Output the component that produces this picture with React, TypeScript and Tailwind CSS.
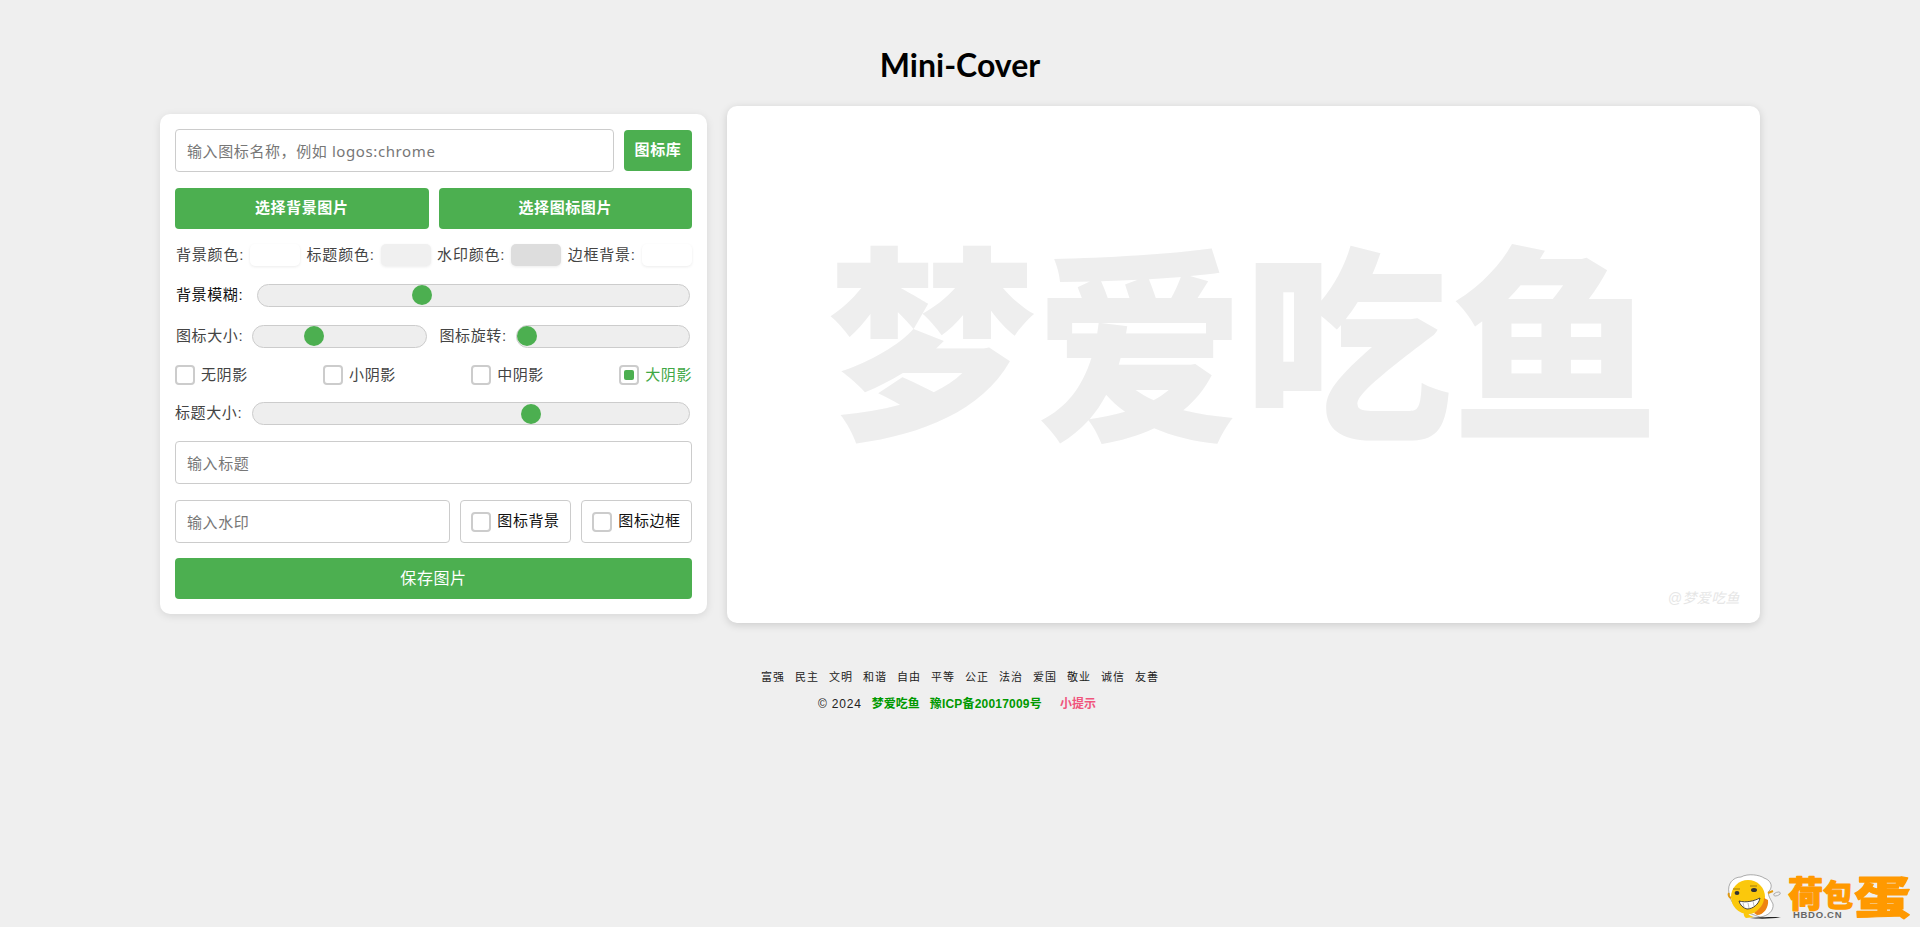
import { useState } from "react";

const cjk = "font-['Liberation_Sans','Noto_Sans_CJK_SC',sans-serif]";

const sliderCls =
  "h-[23px] min-w-0 flex-1 cursor-pointer appearance-none rounded-full border border-[#ccc] bg-[#eee] outline-none [&::-webkit-slider-thumb]:h-5 [&::-webkit-slider-thumb]:w-5 [&::-webkit-slider-thumb]:appearance-none [&::-webkit-slider-thumb]:rounded-full [&::-webkit-slider-thumb]:bg-[#4caf50]";

const inputCls =
  "h-[43px] rounded border border-[#ccc] bg-white px-[11px] text-[15px] text-[#333] outline-none placeholder:text-[#777] font-['Noto_Sans','Noto_Sans_CJK_SC',sans-serif]";

function Slider({ value }: { value: number }) {
  const [v, setV] = useState(value);
  return <input type="range" min={0} max={100} step={0.1} value={v} onChange={(e) => setV(Number(e.target.value))} className={sliderCls} />;
}

function Swatch({ color }: { color: string }) {
  return <span className="h-[22px] w-[50px] shrink-0 rounded-[5px] shadow-[0_1px_3px_rgba(0,0,0,0.08)]" style={{ backgroundColor: color }} />;
}

function Check({ checked, label, dark }: { checked?: boolean; label: string; dark?: boolean }) {
  return (
    <label className={`flex items-center gap-[6px] text-[15px] ${checked ? "text-[#3fa845]" : dark ? "text-[#111]" : "text-[#444]"}`}>
      <span className="flex h-5 w-5 items-center justify-center rounded-[4px] border-2 border-[#ccc] bg-white">
        {checked && <span className="h-[10px] w-[10px] rounded-[2px] bg-[#4caf50]" />}
      </span>
      {label}
    </label>
  );
}

// bitmap logo in the shot, redrawn roughly
function Logo() {
  return (
    <svg width="210" height="67" viewBox="0 0 210 67" className="block">
      <path d="M19 33 C17 24 23 17 31 17 C38 13 50 15 54 18 C60 20 63 25 60 30 C56 33 60 38 63 44 C64 51 58 56 50 57 L36 52 C26 48 20 42 19 33Z" fill="#fff" stroke="#777" strokeWidth="0.6" />
      <circle cx="38" cy="37" r="17" fill="#fbc80c" />
      <path d="M44 53 C50 49 54 44 54 38 L58 40 C59 47 54 55 47 55Z" fill="#ee8410" />
      <path d="M36 50 C38 55 42 57 45 57 L36 58 C33 56 33 52 36 50Z" fill="#fbc80c" />
      <path d="M40 58 C48 57 62 57 71 57 C62 59 48 59 40 58Z" fill="#222" />
      <path d="M21 38 C19 37 18 35 19 33 M58 33 L63 31" stroke="#e29a10" strokeWidth="2" fill="none" />
      <path d="M29 41 C36 43 44 41 50 38 C49 44 43 49 37 49 C33 48 30 45 29 41Z" fill="#fff" stroke="#333" strokeWidth="0.9" />
      <path d="M33 43 L34 47 M38 43 L39 48 M43 41 L44 46" stroke="#777" strokeWidth="0.5" />
      <ellipse cx="27" cy="33" rx="2.4" ry="2" fill="#333" />
      <ellipse cx="44" cy="30" rx="3" ry="2" fill="#333" />
      <path d="M23 29 L30 29 M40 26 L47 26" stroke="#7a5a10" strokeWidth="0.7" />
      <ellipse cx="67" cy="34" rx="3.5" ry="1.7" fill="none" stroke="#999" strokeWidth="0.7" transform="rotate(-20 67 34)" />
      <g fontFamily="'Noto Sans CJK SC',sans-serif" fontWeight="900" fill="#ff9900" stroke="#ff9900" strokeWidth="1.2" strokeLinejoin="round">
        <text x="78" y="47" fontSize="35">荷</text>
        <text x="113" y="46" fontSize="30">包</text>
        <text transform="translate(144 54) scale(1.28 1)" fontSize="44">蛋</text>
      </g>
      <text x="83" y="58" fontFamily="'Liberation Sans',sans-serif" fontWeight="700" fontSize="9.5" letterSpacing="0.7" fill="#666">
        HBDO.CN
      </text>
    </svg>
  );
}

const values = ["富强", "民主", "文明", "和谐", "自由", "平等", "公正", "法治", "爱国", "敬业", "诚信", "友善"];

export default function App() {
  return (
    <div className={`relative h-[927px] overflow-hidden bg-[#efefef] ${cjk}`}>
      <h1 className="pt-[42px] text-center text-[32px] leading-[46px] font-bold text-black font-['Lato','Noto_Sans',sans-serif]">Mini-Cover</h1>

      <div className="mx-auto mt-[18px] flex w-[1600px] items-start gap-5">
        {/* controls */}
        <div className="mt-2 flex w-[547px] shrink-0 flex-col rounded-[10px] bg-white p-[15px] tracking-[0.6px] shadow-[0_2px_8px_rgba(0,0,0,0.1)]">
          <div className="flex items-center gap-[10px]">
            <input className={`${inputCls} min-w-0 flex-1`} placeholder="输入图标名称，例如 logos:chrome" />
            <button className="h-[41px] w-[68px] rounded bg-[#4caf50] text-[15px] font-bold text-white">图标库</button>
          </div>

          <div className="mt-[16px] flex gap-[10px]">
            <button className="h-[41px] flex-1 rounded bg-[#4caf50] text-[15px] font-bold text-white">选择背景图片</button>
            <button className="h-[41px] flex-1 rounded bg-[#4caf50] text-[15px] font-bold text-white">选择图标图片</button>
          </div>

          <div className="mt-[15px] flex items-center justify-between text-[15px] tracking-[0.8px] text-[#444]">
            <span className="ml-px">背景颜色:</span>
            <Swatch color="#ffffff" />
            <span>标题颜色:</span>
            <Swatch color="#f0f0f0" />
            <span>水印颜色:</span>
            <Swatch color="#dddddd" />
            <span>边框背景:</span>
            <Swatch color="#ffffff" />
          </div>

          <div className="mt-[17px] flex items-center gap-[14px] pr-[2px] text-[15px] text-[#111]">
            <span className="ml-px">背景模糊:</span>
            <Slider value={37.4} />
          </div>

          <div className="mt-[18px] flex items-center gap-[9px] pr-[2px] text-[15px] text-[#444]">
            <span className="ml-px">图标大小:</span>
            <Slider value={33.6} />
            <span className="ml-[4px]">图标旋转:</span>
            <Slider value={0} />
          </div>

          <div className="mt-[16px] flex items-center justify-between">
            <Check label="无阴影" />
            <Check label="小阴影" />
            <Check label="中阴影" />
            <Check label="大阴影" checked />
          </div>

          <div className="mt-[16px] flex items-center gap-[10px] pr-[2px] text-[15px] text-[#444]">
            <span>标题大小:</span>
            <Slider value={64.3} />
          </div>

          <input className={`${inputCls} mt-[16px]`} placeholder="输入标题" />

          <div className="mt-[16px] flex gap-[10px]">
            <input className={`${inputCls} w-[275px]`} placeholder="输入水印" />
            <div className="flex h-[43px] flex-1 items-center justify-center rounded border border-[#ccc]">
              <Check label="图标背景" dark />
            </div>
            <div className="flex h-[43px] flex-1 items-center justify-center rounded border border-[#ccc]">
              <Check label="图标边框" dark />
            </div>
          </div>

          <button className="mt-[15px] h-[41px] rounded bg-[#4caf50] text-[16px] text-white">保存图片</button>
        </div>

        {/* preview */}
        <div className="relative flex h-[517px] flex-1 items-center justify-center overflow-hidden rounded-[10px] bg-white pb-[62px] shadow-[0_2px_8px_rgba(0,0,0,0.15)]">
          <span className="text-[208px] leading-none font-black whitespace-nowrap text-[#eee] font-['Noto_Sans_CJK_SC',sans-serif]">梦爱吃鱼</span>
          <span className="absolute right-5 bottom-[14px] text-[14px] tracking-[0.4px] text-[#e6e6e6] italic">@梦爱吃鱼</span>
        </div>
      </div>

      <div className="mt-[46px] flex justify-center gap-[10px] text-[11px] tracking-[1px] text-[#222]">
        {values.map((v) => (
          <span key={v}>{v}</span>
        ))}
      </div>
      <div className="mt-[9px] flex justify-center pr-[6px] text-[12px] text-[#222]">
        <span className="tracking-[0.8px]">© 2024</span>
        <span className="ml-[10px] font-bold text-[#090]">梦爱吃鱼</span>
        <span className="ml-[10px] font-bold tracking-[0.2px] text-[#090]">豫ICP备20017009号</span>
        <span className="ml-[18px] font-bold text-[#f0557c]">小提示</span>
      </div>

      <div className="absolute right-0 bottom-0">
        <Logo />
      </div>
    </div>
  );
}
